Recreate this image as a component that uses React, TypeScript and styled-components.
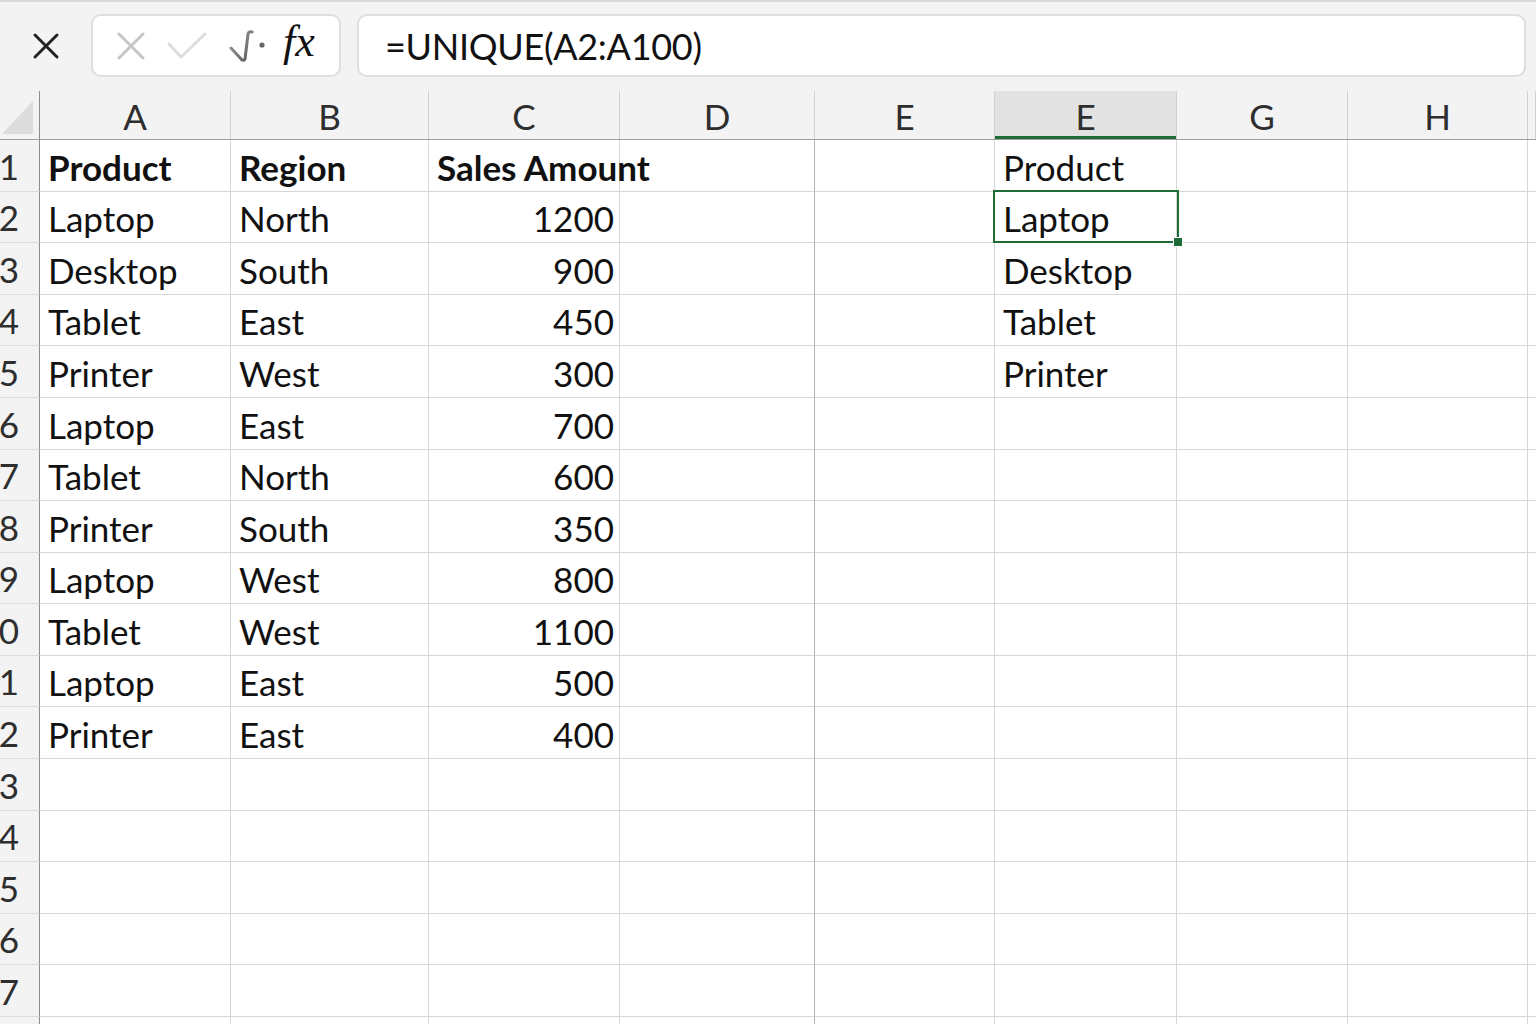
import React from 'react';
import styled, { createGlobalStyle } from 'styled-components';

const GlobalStyle = createGlobalStyle`
	html, body {
		margin: 0;
		padding: 0;
		background: #ffffff;
		overflow: hidden;
	}
	body {
		font-family: Lato, "Noto Sans", sans-serif;
		color: #111;
	}
`;

const columns = [
	{ label: 'A', width: 191 },
	{ label: 'B', width: 198 },
	{ label: 'C', width: 191 },
	{ label: 'D', width: 195 },
	{ label: 'E', width: 180 },
	{ label: 'E', width: 182, selected: true },
	{ label: 'G', width: 171 },
	{ label: 'H', width: 180 },
	{ label: '', width: 8 },
];

const data: string[][] = [
	['Product', 'Region', 'Sales Amount'],
	['Laptop', 'North', '1200'],
	['Desktop', 'South', '900'],
	['Tablet', 'East', '450'],
	['Printer', 'West', '300'],
	['Laptop', 'East', '700'],
	['Tablet', 'North', '600'],
	['Printer', 'South', '350'],
	['Laptop', 'West', '800'],
	['Tablet', 'West', '1100'],
	['Laptop', 'East', '500'],
	['Printer', 'East', '400'],
];

const spill = ['Product', 'Laptop', 'Desktop', 'Tablet', 'Printer'];

const ROW_COUNT = 18;
const ROW_TOP = 139;
const ROW_STEP = 51.59;

// whole-pixel row heights so the grid lines stay crisp
const rowHeight = (i: number) =>
	Math.round(ROW_TOP + ROW_STEP * (i + 1)) - Math.round(ROW_TOP + ROW_STEP * i);

class App extends React.Component {
	renderRow(r: number) {
		const row = data[r] || [];
		const cells = columns.map((col, c) => {
			let text = '';
			let align: 'left' | 'right' = 'left';
			if (c < 3 && row[c]) {
				text = row[c];
				if (c === 2 && r > 0) align = 'right';
			}
			if (c === 5 && spill[r]) text = spill[r];
			return (
				<Cell
					key={c}
					$w={col.width}
					$align={align}
					$bold={r === 0 && c < 3}
					$divider={c === 3}
				>
					{text}
					{c === 5 && r === 1 && (
						<Selection>
							<FillHandle />
						</Selection>
					)}
				</Cell>
			);
		});
		return (
			<Row key={r} $h={rowHeight(r)}>
				<RowHeader>
					<span>{r + 1}</span>
				</RowHeader>
				{cells}
			</Row>
		);
	}

	render() {
		return <Page>
			<GlobalStyle />
			<Toolbar>
				<CloseButton>
					<svg width="28" height="28" viewBox="0 0 28 28">
						<path d="M3 3 L25 25 M25 3 L3 25" stroke="#222" strokeWidth="3" strokeLinecap="round" />
					</svg>
				</CloseButton>
				<ActionBox>
					<svg width="28" height="28" viewBox="0 0 28 28">
						<path d="M2 2 L26 26 M26 2 L2 26" stroke="#c6c6c6" strokeWidth="3" strokeLinecap="round" />
					</svg>
					<svg width="40" height="28" viewBox="0 0 40 28">
						<path d="M2 12 L14 25 L38 2" stroke="#dddddd" strokeWidth="3" fill="none" strokeLinecap="round" strokeLinejoin="round" />
					</svg>
					<svg width="38" height="34" viewBox="0 0 38 34">
						<defs>
							<linearGradient id="fnGrad" x1="0" y1="0" x2="1" y2="1">
								<stop offset="0" stopColor="#a0a0a0" />
								<stop offset="1" stopColor="#5a5a5a" />
							</linearGradient>
						</defs>
						<path d="M2 19 L13 31 Q15 32 16 30 L19 5 Q20 2 23 3" stroke="url(#fnGrad)" strokeWidth="3" fill="none" strokeLinecap="round" strokeLinejoin="round" />
						<circle cx="33" cy="16" r="2.6" fill="#666" />
					</svg>
					<FxLabel>fx</FxLabel>
				</ActionBox>
				<FormulaBox>=UNIQUE(A2:A100)</FormulaBox>
			</Toolbar>
			<Sheet>
				<HeaderRow>
					<Corner>
						<svg width="34" height="36" viewBox="0 0 34 36">
							<path d="M33 3 L33 36 L2 36 Z" fill="#dcdcdc" />
						</svg>
					</Corner>
					{columns.map((col, i) => (
						<ColumnHeader key={i} $w={col.width} $selected={!!col.selected}>
							{col.label}
						</ColumnHeader>
					))}
				</HeaderRow>
				{Array.from({ length: ROW_COUNT }, (_, r) => this.renderRow(r))}
			</Sheet>
		</Page>;
	}
}

const Page = styled.div`
	width: 1536px;
	height: 1024px;
	overflow: hidden;
	background: #ffffff;
`;

const Toolbar = styled.div`
	height: 91px;
	border-top: 2px solid #d9d9d9;
	background: #f3f3f3;
	display: flex;
	align-items: flex-start;
	padding: 12px 10px 0 0;
	box-sizing: border-box;
`;

const CloseButton = styled.div`
	width: 91px;
	height: 63px;
	display: flex;
	align-items: center;
	justify-content: center;
`;

const ActionBox = styled.div`
	width: 250px;
	height: 63px;
	box-sizing: border-box;
	background: #ffffff;
	border: 2px solid #dedede;
	border-radius: 10px;
	display: flex;
	align-items: center;
	gap: 22px;
	padding-left: 24px;
	margin-right: 16px;
	svg {
		flex-shrink: 0;
	}
`;

const FxLabel = styled.span`
	font-family: "Liberation Serif", "DejaVu Serif", serif;
	font-style: italic;
	font-size: 44px;
	color: #111;
	margin-left: -6px;
	margin-top: -8px;
`;

const FormulaBox = styled.div`
	flex: 1;
	height: 63px;
	box-sizing: border-box;
	background: #ffffff;
	border: 2px solid #dedede;
	border-radius: 10px;
	display: flex;
	align-items: center;
	padding-left: 26px;
	font-family: Lato, "Noto Sans", sans-serif;
	font-size: 36px;
	color: #111;
	letter-spacing: -0.3px;
`;

const Sheet = styled.div`
	display: flex;
	flex-direction: column;
`;

const HeaderRow = styled.div`
	display: flex;
	height: 48px;
	background: #f3f3f3;
	border-bottom: 1px solid #9e9e9e;
`;

const Corner = styled.div`
	width: 40px;
	flex-shrink: 0;
	box-sizing: border-box;
	border-right: 1px solid #8c8c8c;
	display: flex;
	align-items: flex-end;
	justify-content: flex-start;
	padding-bottom: 5px;
`;

const ColumnHeader = styled.div<{ $w: number; $selected: boolean }>`
	width: ${p => p.$w}px;
	flex-shrink: 0;
	box-sizing: border-box;
	border-right: 1px solid #d2d2d2;
	background: ${p => (p.$selected ? '#e2e2e2' : '#f3f3f3')};
	box-shadow: ${p => (p.$selected ? 'inset 0 -3px 0 #1e6b38' : 'none')};
	display: flex;
	align-items: center;
	justify-content: center;
	font-size: 35px;
	color: #2e2e2e;
	padding-top: 2px;
`;

const Row = styled.div<{ $h: number }>`
	display: flex;
	height: ${p => p.$h}px;
	flex-shrink: 0;
`;

const RowHeader = styled.div`
	width: 40px;
	flex-shrink: 0;
	box-sizing: border-box;
	background: #f3f3f3;
	border-right: 1px solid #8c8c8c;
	border-bottom: 1px solid #dcdcdc;
	display: flex;
	align-items: center;
	justify-content: flex-end;
	padding-right: 20px;
	font-size: 35px;
	color: #2e2e2e;
	white-space: nowrap;
`;

const Cell = styled.div<{ $w: number; $align: 'left' | 'right'; $bold: boolean; $divider: boolean }>`
	position: relative;
	width: ${p => p.$w}px;
	box-sizing: border-box;
	flex-shrink: 0;
	border-right: 1px solid ${p => (p.$divider ? '#b4b4b4' : '#d6d6d6')};
	border-bottom: 1px solid #d6d6d6;
	display: flex;
	align-items: center;
	justify-content: ${p => (p.$align === 'right' ? 'flex-end' : 'flex-start')};
	padding: 2px 5px 0 8px;
	font-size: 35px;
	font-weight: ${p => (p.$bold ? 700 : 400)};
	color: #111;
	white-space: nowrap;
`;

const Selection = styled.div`
	position: absolute;
	z-index: 2;
	left: -2px;
	top: -2px;
	right: -3px;
	bottom: -1px;
	border: 2px solid #1e6b38;
	pointer-events: none;
`;

const FillHandle = styled.div`
	position: absolute;
	right: -6px;
	bottom: -6px;
	width: 8px;
	height: 8px;
	background: #1e6b38;
	border: 1px solid #ffffff;
`;

export default App;
